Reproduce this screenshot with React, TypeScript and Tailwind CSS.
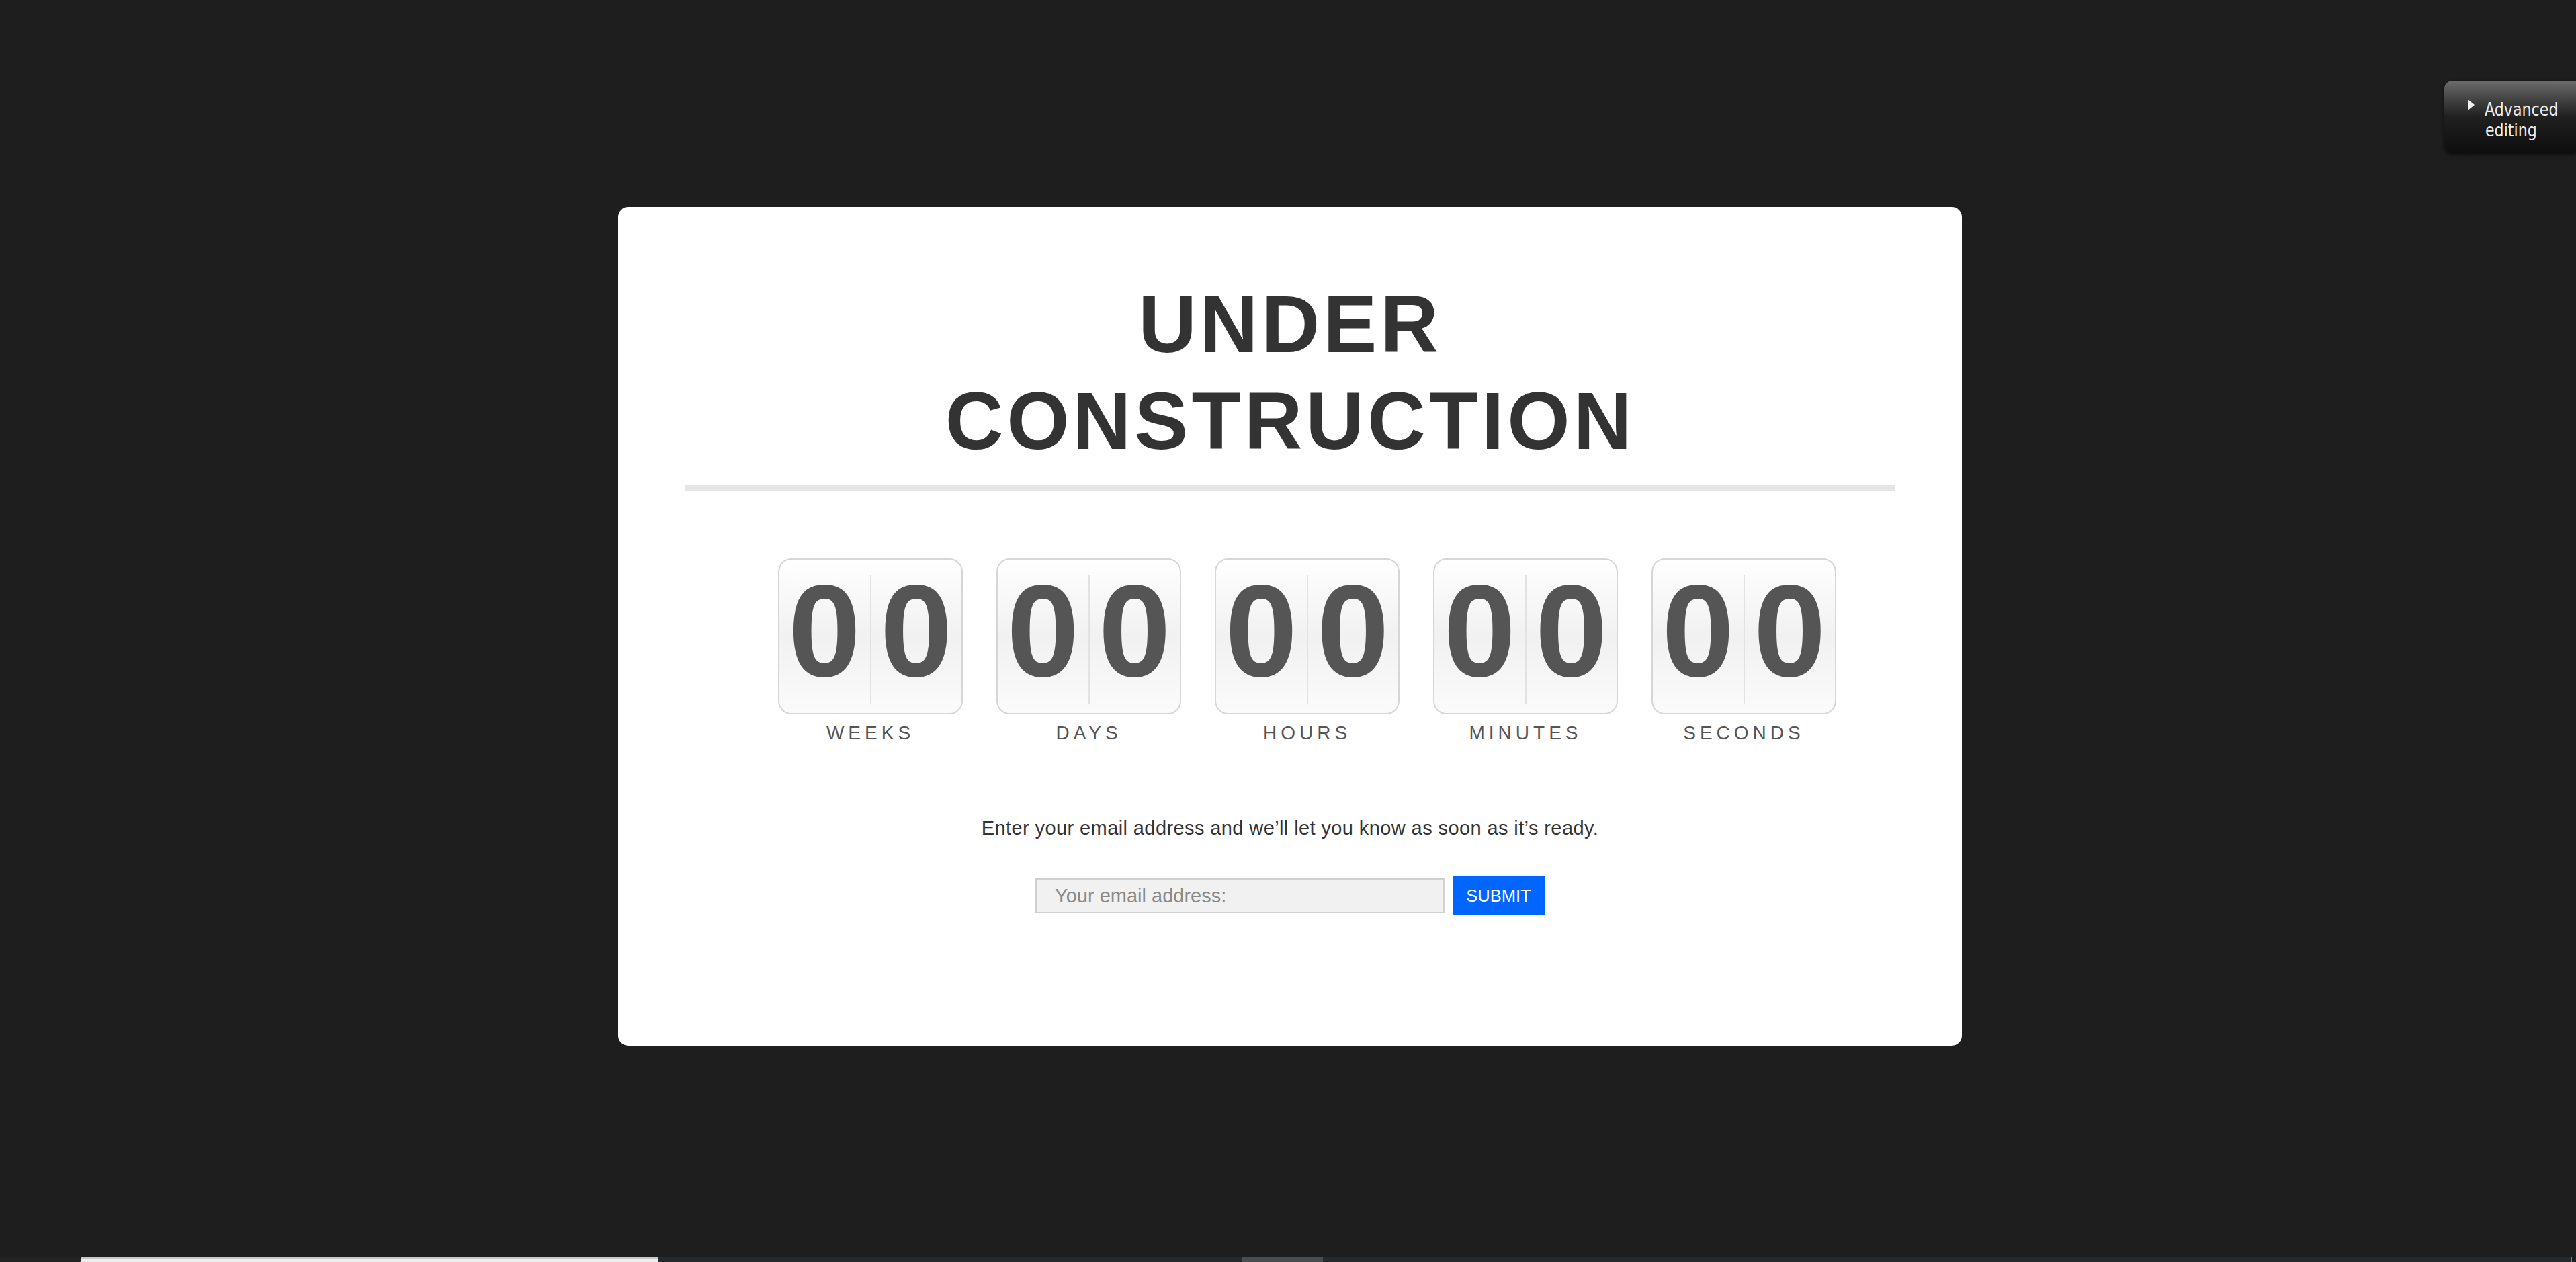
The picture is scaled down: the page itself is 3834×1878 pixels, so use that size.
import React from 'react'

const units = ['WEEKS', 'DAYS', 'HOURS', 'MINUTES', 'SECONDS']

function Digit({ value }: { value: string }) {
    return (
        <div className="flex-1 flex justify-center pt-[9px]">
            <span className="text-[194px] leading-[194px] font-bold text-[#555555]">{value}</span>
        </div>
    )
}

function CountdownUnit({ label }: { label: string }) {
    return (
        <div className="flex flex-col items-center">
            <div className="w-[275px] h-[232px] rounded-[20px] border-2 border-[#d6d6d6] bg-linear-to-b from-white via-[#f1f1f1] to-[#fbfbfb] flex">
                <Digit value="0" />
                <div className="w-[2px] bg-[#e2e2e2] mt-[23px] mb-[14px]" />
                <Digit value="0" />
            </div>
            <p className="mt-[12px] text-[28px] leading-[32px] tracking-[6px] text-[#555555]">{label}</p>
        </div>
    )
}

function AdvancedTab() {
    return (
        <div className="absolute top-[120px] right-0 w-[196px] h-[108px] rounded-l-[12px] bg-linear-to-b from-[#6c6c6c] via-[#202020] to-[#0e0e0e] shadow-[0_2px_6px_rgba(0,0,0,0.6)] flex items-start pl-[35px] pt-[27px] gap-[15px]">
            <span className="mt-[1px] w-0 h-0 border-y-[8px] border-y-transparent border-l-[10px] border-l-[#f0f0f0]" />
            <div className="flex flex-col text-[#ececec] font-['DejaVu_Sans_Condensed','Liberation_Sans_Narrow',sans-serif] text-[26.5px] leading-[31px] scale-x-[0.93] origin-top-left">
                <span>Advanced</span>
                <span className="pl-[1px]">editing</span>
            </div>
        </div>
    )
}

function BottomStrip() {
    return (
        <div className="h-[8px] flex border-t border-t-[#151515]">
            <div className="w-[121px] bg-[#232323]" />
            <div className="w-[859px] bg-[#eeeeee] border-t-2 border-t-[#c8c8c8]" />
            <div className="w-[868px] bg-[#26292b]" />
            <div className="w-[121px] bg-[#4b4c4e]" />
            <div className="flex-1 bg-[#26292b]" />
            <div className="w-[2px] bg-[#7a7a7a]" />
            <div className="w-[6px] bg-[#1e1e1e]" />
        </div>
    )
}

export default function App() {
    return (
        <div className="relative min-h-[1878px] bg-[#1e1e1e] flex flex-col font-['Liberation_Sans',Arial,sans-serif]">
            <AdvancedTab />
            <div className="flex-1 flex justify-center items-start pt-[308px] pl-[6px]">
                <div className="w-[2000px] rounded-[15px] bg-white px-[100px] pt-[102px] pb-[194px] flex flex-col items-center">
                    <h1 className="text-center text-[120px] leading-[144px] font-bold tracking-[5px] text-[#333333]">
                        UNDER
                        <br />
                        CONSTRUCTION
                    </h1>
                    <div className="self-stretch h-[9px] bg-[#e6e6e6] mt-[23px]" />

                    <div className="flex gap-[50px] mt-[101px] pl-[51px]">
                        {units.map((u) => (
                            <CountdownUnit key={u} label={u} />
                        ))}
                    </div>

                    <p className="mt-[109px] text-[29px] leading-[32px] tracking-[0.4px] text-[#333333]">
                        Enter your email address and we’ll let you know as soon as it’s ready.
                    </p>

                    <form className="mt-[56px] flex items-center" onSubmit={(e) => e.preventDefault()}>
                        <input
                            type="email"
                            placeholder="Your email address:"
                            className="w-[609px] h-[52px] bg-[#f1f1f1] border-2 border-[#d0d0d0] px-[27px] text-[29px] text-[#333333] placeholder:text-[#8a8a8a] outline-none"
                        />
                        <button
                            type="submit"
                            className="ml-[12px] w-[137px] h-[58px] bg-[#0066ff] text-white text-[25.5px]"
                        >
                            SUBMIT
                        </button>
                    </form>
                </div>
            </div>
            <BottomStrip />
        </div>
    )
}
